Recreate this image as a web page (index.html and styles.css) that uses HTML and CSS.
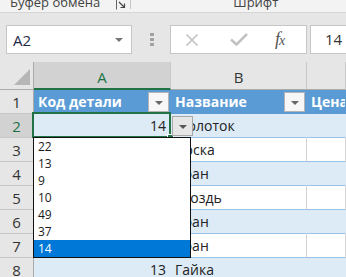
FILE: index.html
```html
<!DOCTYPE html>
<html lang="ru">
<head>
  <meta charset="UTF-8" />
  <title>Книга1 - Excel</title>
  <link rel="stylesheet" href="styles.css">
</head>
<body>
  <!-- Ribbon bottom edge -->
  <div class="ribbon">
    <div class="rgroup clip">Буфер обмена</div>
    <svg class="launcher" width="11" height="10" viewBox="0 0 11 10">
      <path d="M0.5 -3 V9.5 M0.5 -2.5 H10" stroke="#666" fill="none" />
      <path d="M3 2 L8.5 7.5 M8.5 3.5 V7.5 H4.5" stroke="#444" stroke-width="1.2" fill="none" />
    </svg>
    <div class="rsep"></div>
    <div class="rgroup font">Шрифт</div>
  </div>

  <!-- Formula bar -->
  <div class="fbar">
    <div class="namebox">
      <span>A2</span>
      <svg width="8" height="4" viewBox="0 0 8 4"><path d="M0 0 H8 L4 4 Z" fill="#767676" /></svg>
    </div>
    <div class="dots"><i></i><i></i><i></i></div>
    <div class="fbtns">
      <svg class="ico x" width="14" height="12" viewBox="0 0 14 12">
        <path d="M1.5 0.5 L12.5 11.5 M12.5 0.5 L1.5 11.5" stroke="#c2c2c2" stroke-width="1.6" />
      </svg>
      <svg class="ico ok" width="18" height="13" viewBox="0 0 18 13">
        <path d="M1 6.5 L6.5 11.5 L17 1" stroke="#c2c2c2" stroke-width="2.6" fill="none" />
      </svg>
      <span class="fx"><i>f</i><i>x</i></span>
    </div>
    <div class="fval">14</div>
  </div>

  <!-- Sheet -->
  <div class="sheet">
    <div class="ch corner">
      <svg width="16" height="16" viewBox="0 0 16 16"><path d="M16 0 V16 H0 Z" fill="#b6b6b6" /></svg>
    </div>
    <div class="ch sel">A</div>
    <div class="ch">B</div>
    <div class="ch"></div>

    <div class="rh">1</div>
    <div class="c hd">Код детали <span class="flt"></span></div>
    <div class="c hd">Название <span class="flt"></span></div>
    <div class="c hd">Цена</div>

    <div class="rh sel">2</div>
    <div class="c b num">14</div>
    <div class="c b">Молоток</div>
    <div class="c b"></div>

    <div class="rh">3</div>
    <div class="c w num">22</div>
    <div class="c w">Доска</div>
    <div class="c w"></div>

    <div class="rh">4</div>
    <div class="c b num">13</div>
    <div class="c b">Кран</div>
    <div class="c b"></div>

    <div class="rh">5</div>
    <div class="c w num">9</div>
    <div class="c w">Гвоздь</div>
    <div class="c w"></div>

    <div class="rh">6</div>
    <div class="c b num">10</div>
    <div class="c b">Кран</div>
    <div class="c b"></div>

    <div class="rh">7</div>
    <div class="c w num">49</div>
    <div class="c w">Кран</div>
    <div class="c w"></div>

    <div class="rh">8</div>
    <div class="c b num">13</div>
    <div class="c b">Гайка</div>
    <div class="c b"></div>
  </div>

  <!-- Active cell + validation dropdown -->
  <div class="active"><span class="handle"></span></div>
  <div class="vbtn"></div>
  <div class="dd">
    <div class="opt">22</div>
    <div class="opt">13</div>
    <div class="opt">9</div>
    <div class="opt">10</div>
    <div class="opt">49</div>
    <div class="opt">37</div>
    <div class="opt on">14</div>
  </div>
</body>
</html>
```

FILE: styles.css
```css
body {
  margin: 0;
  width: 346px;
  height: 277px;
  overflow: hidden;
  position: relative;
  background: #fff;
  font-family: "Open Sans", "Liberation Sans", sans-serif;
  color: #222;
}

/* Ribbon */
.ribbon {
  height: 12px;
  background: #f3f3f3;
  border-bottom: 1px solid #d5d5d5;
  overflow: hidden;
  display: flex;
  font-size: 13px;
  color: #444;
}
.rgroup {
  line-height: 13px;
  margin-top: -4px;
  white-space: nowrap;
}
.clip { margin-left: 10px; }
.launcher { margin: 0 0 0 16px; }
.rsep {
  width: 1px;
  height: 9px;
  background: #c6c6c6;
  margin-left: 3px;
}
.font { margin-left: 102px; }

/* Formula bar */
.fbar {
  height: 49px;
  box-sizing: border-box;
  padding-top: 12px;
  background: #e6e6e6;
  display: flex;
  align-items: flex-start;
}
.namebox {
  width: 126px;
  height: 29px;
  box-sizing: border-box;
  margin-left: 6px;
  border: 1px solid #c6c6c6;
  background: #fff;
  display: flex;
  align-items: center;
  justify-content: space-between;
  padding: 0 8px 0 6px;
  font-size: 15px;
  color: #1f2a44;
}
.dots {
  width: 4px;
  margin: 8px 16px 0 18px;
  display: flex;
  flex-direction: column;
  gap: 2px;
}
.dots i {
  width: 4px;
  height: 3px;
  background: #a0a0a0;
}
.fbtns {
  width: 137px;
  height: 29px;
  box-sizing: border-box;
  border: 1px solid #c6c6c6;
  background: #fff;
  display: flex;
  align-items: center;
  padding-left: 14px;
}
.ico.ok { margin-left: 31px; }
.fx {
  margin-left: 27px;
  font-family: "Liberation Serif", serif;
  font-style: italic;
  font-size: 18px;
  color: #555;
  letter-spacing: -1px;
}
.fx i:last-child { font-size: 14px; }
.fval {
  flex: 1;
  height: 29px;
  box-sizing: border-box;
  margin-left: 3px;
  border: 1px solid #c6c6c6;
  border-right: none;
  background: #fff;
  padding-left: 14px;
  line-height: 27px;
  font-size: 15px;
  color: #333;
}

/* Sheet grid */
.sheet {
  display: grid;
  grid-template-columns: 34px 137px 136px 1fr;
  grid-template-rows: 28px repeat(8, 24px);
  font-size: 14px;
}
.ch {
  background: #e6e6e6;
  border-right: 1px solid #c8c8c8;
  border-bottom: 1px solid #ababab;
  text-align: center;
  line-height: 30px;
  font-size: 15px;
  color: #333;
}
.ch.sel {
  background: #d2d2d2;
  color: #217346;
  border-bottom: 2px solid #217346;
}
.corner {
  display: flex;
  align-items: flex-end;
  justify-content: flex-end;
  padding: 0 3px 4px 0;
  border-right-color: #ababab;
}
.rh {
  background: #e6e6e6;
  border-right: 1px solid #ababab;
  border-bottom: 1px solid #c8c8c8;
  text-align: center;
  line-height: 25px;
  font-size: 15px;
  color: #333;
}
.rh.sel {
  background: #d2d2d2;
  color: #217346;
}
.c {
  box-sizing: border-box;
  padding: 1px 4px 0;
  line-height: 22px;
  white-space: nowrap;
  overflow: hidden;
  border-right: 1px solid #d4d4d4;
  border-bottom: 1px solid #9bc2e6;
}
.num { text-align: right; }
.hd {
  background: #5b9bd5;
  color: #fff;
  font-weight: bold;
  border-color: #5b9bd5;
  display: flex;
  align-items: center;
  justify-content: space-between;
  padding-right: 1px;
}
.b {
  background: #ddebf7;
  border-right-color: #ddebf7;
}
.w { background: #fff; }

.flt {
  width: 19px;
  height: 18px;
  border: 1px solid #b4b4b4;
  background: #f7f7f7;
  position: relative;
}
.flt::after {
  content: "";
  position: absolute;
  left: 6px;
  top: 8px;
  border-left: 4px solid transparent;
  border-right: 4px solid transparent;
  border-top: 4px solid #666;
}

/* Overlays */
.active {
  position: absolute;
  left: 32px;
  top: 112px;
  width: 135px;
  height: 22px;
  border: 2px solid #217346;
}
.handle {
  position: absolute;
  right: -5px;
  bottom: -5px;
  width: 5px;
  height: 5px;
  background: #217346;
  border: 1px solid #fff;
}
.vbtn {
  position: absolute;
  left: 172px;
  top: 116px;
  width: 19px;
  height: 18px;
  border: 1px solid #a8a8a8;
  background: #e6e6e6;
}
.vbtn::after {
  content: "";
  position: absolute;
  left: 6px;
  top: 8px;
  border-left: 4px solid transparent;
  border-right: 4px solid transparent;
  border-top: 4px solid #555;
}
.dd {
  position: absolute;
  left: 33px;
  top: 137px;
  width: 158px;
  height: 121px;
  box-sizing: border-box;
  border: 1px solid #111;
  background: #fff;
  font-size: 12px;
}
.opt {
  height: 17px;
  line-height: 18px;
  padding-left: 4px;
  color: #1a1a1a;
}
.opt.on {
  background: #0078d7;
  color: #fff;
}
```
